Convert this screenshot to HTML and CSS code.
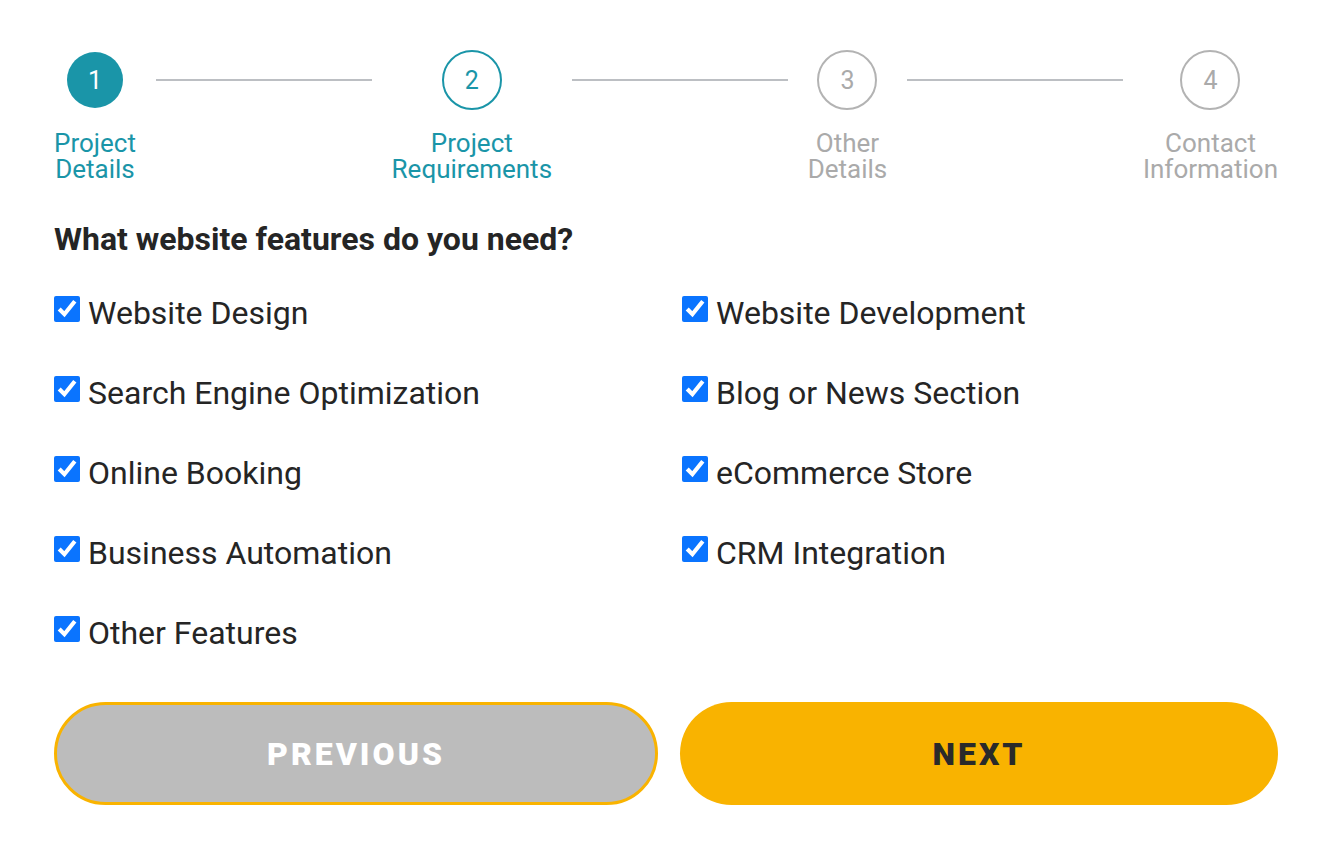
FILE: index.html
```html
<!DOCTYPE html>
<html lang="en">
<head>
<meta charset="utf-8">
<title>Project Requirements</title>
<link rel="stylesheet" href="styles.css">
</head>
<body>
<div class="wizard">
  <div class="steps">
    <div class="step done">
      <div class="dot-wrap"><span class="dot">1</span></div>
      <div class="step-label">Project<br>Details</div>
    </div>
    <div class="line"></div>
    <div class="step current">
      <div class="dot-wrap"><span class="dot">2</span></div>
      <div class="step-label">Project<br>Requirements</div>
    </div>
    <div class="line"></div>
    <div class="step">
      <div class="dot-wrap"><span class="dot">3</span></div>
      <div class="step-label">Other<br>Details</div>
    </div>
    <div class="line"></div>
    <div class="step">
      <div class="dot-wrap"><span class="dot">4</span></div>
      <div class="step-label">Contact<br>Information</div>
    </div>
  </div>

  <h2 class="question">What website features do you need?</h2>

  <div class="options">
    <label class="option"><input type="checkbox" checked><span>Website Design</span></label>
    <label class="option"><input type="checkbox" checked><span>Website Development</span></label>
    <label class="option"><input type="checkbox" checked><span>Search Engine Optimization</span></label>
    <label class="option"><input type="checkbox" checked><span>Blog or News Section</span></label>
    <label class="option"><input type="checkbox" checked><span>Online Booking</span></label>
    <label class="option"><input type="checkbox" checked><span>eCommerce Store</span></label>
    <label class="option"><input type="checkbox" checked><span>Business Automation</span></label>
    <label class="option"><input type="checkbox" checked><span>CRM Integration</span></label>
    <label class="option"><input type="checkbox" checked><span>Other Features</span></label>
  </div>

  <div class="actions">
    <button class="btn btn-prev" type="button">PREVIOUS</button>
    <button class="btn btn-next" type="button">NEXT</button>
  </div>
</div>
</body>
</html>
```
FILE: styles.css
```css
* { box-sizing: border-box; }

html, body {
  margin: 0;
  padding: 0;
  background: #ffffff;
}

body {
  font-family: Roboto, "Liberation Sans", Arial, sans-serif;
  color: #252525;
}

.wizard {
  width: 1326px;
  padding: 50px 48px 0 54px;
}

.steps {
  display: flex;
  align-items: flex-start;
}

.step {
  display: flex;
  flex-direction: column;
  align-items: center;
  color: #aaaaaa;
}

.dot-wrap {
  height: 60px;
  display: flex;
  align-items: center;
  justify-content: center;
}

.dot {
  width: 60px;
  height: 60px;
  border-radius: 50%;
  border: 2px solid #b3b3b3;
  display: flex;
  align-items: center;
  justify-content: center;
  font-size: 25px;
  color: #aaaaaa;
}

.step.done .dot {
  width: 56px;
  height: 56px;
  border: none;
  background: #1a95a8;
  color: #ffffff;
}

.step.current .dot {
  border-color: #1a95a8;
  color: #1a95a8;
}

.step.done,
.step.current {
  color: #1a95a8;
}

.step-label {
  margin-top: 20px;
  font-size: 26px;
  line-height: 26px;
  text-align: center;
}

.line {
  flex: 1;
  height: 2px;
  background: #bcbfc3;
  margin: 29px 20px 0;
}

.question {
  margin: 40px 0 0;
  font-size: 32px;
  line-height: 34px;
  font-weight: 700;
  color: #252525;
}

.options {
  margin-top: 37px;
  display: grid;
  grid-template-columns: 628px 1fr;
  row-gap: 40px;
}

.option {
  display: flex;
  align-items: flex-start;
  height: 40px;
  font-size: 32px;
  line-height: 40px;
  color: #252525;
}

.option input {
  width: 26px;
  height: 26px;
  margin: 3px 8px 0 0;
  accent-color: #0a74ff;
  flex: none;
}

.actions {
  margin-top: 49px;
  display: flex;
  gap: 22px;
}

.btn {
  flex: 1;
  height: 103px;
  border-radius: 52px;
  font-family: Roboto, "Liberation Sans", Arial, sans-serif;
  font-size: 32px;
  font-weight: 900;
  letter-spacing: 3px;
  cursor: pointer;
}

.btn-prev {
  background: #bcbcbc;
  border: 3px solid #f9b300;
  color: #ffffff;
}

.btn-next {
  background: #f9b300;
  border: none;
  color: #2a2a2a;
}
```
